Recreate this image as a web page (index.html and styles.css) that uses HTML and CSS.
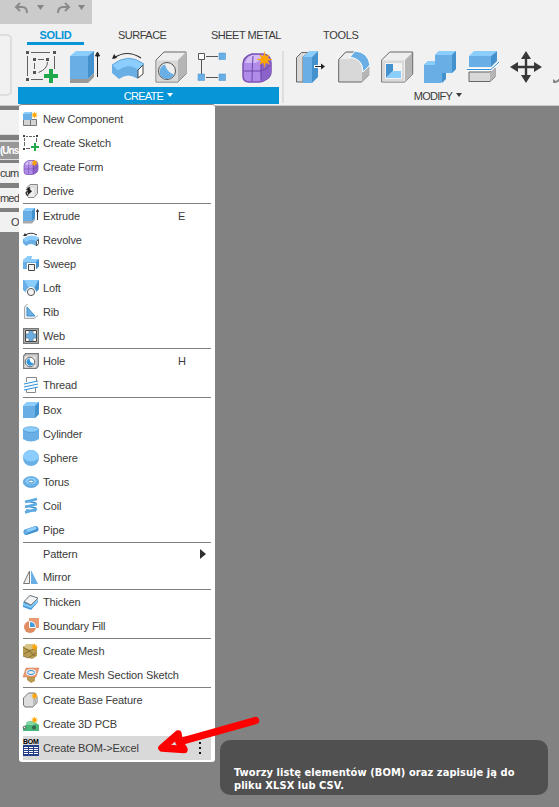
FILE: index.html
```html
<!DOCTYPE html>
<html lang="en">
<head>
<meta charset="utf-8">
<title>Create menu</title>
<link rel="stylesheet" href="styles.css">
</head>
<body>
<svg class="defs" width="0" height="0">
  <symbol id="star" viewBox="0 0 16 16"><path fill="#ffa500" d="M8 0l1.200 5L13 3l-2 3.800L16 8l-5 1.200L13 13l-3.800-2L8 16l-1.200-5L3 13l2-3.800L0 8l5-1.200L3 3l3.800 2z"/></symbol>
  <symbol id="form" viewBox="0 0 32 32"><path d="M11 3h11q8 1 8 9v9q0 4-4 7t-8 3H8q-6 0-6-6V13q0-7 9-10z" fill="#b18be8" stroke="#7952b4" stroke-width="1.500"/><path d="M11 4h9q3 1 0 4t-6 4H4q1-6 7-8z" fill="#d3bbf5"/><path d="M20 12l9-4q2 5 1 13-1 5-9 9-2-1-1-18z" fill="#8a62c8"/><path d="M12 5q-1 13-1 25M3 20h16q7-1 10-6M20 12v18" fill="none" stroke="#6c44a8"/></symbol>
</svg>
<header class="ribbon">
  <div class="history">
    <svg width="92" height="24" viewBox="0 0 92 24"><g fill="none" stroke="#8a8a8a" stroke-width="2"><path d="M20 3l-4 4 4 4M16 7h6q5 0 5 6M65 3l4 4-4 4M69 7h-6q-5 0-5 6"/></g><path d="M37 5h7l-3.500 5zM78 5h7l-3.500 5z" fill="#858585"/></svg>
  </div>
  <div class="workspace"></div>
  <nav class="tabs"><span class="tab solid">SOLID</span><span class="tab surface">SURFACE</span><span class="tab sheet">SHEET METAL</span><span class="tab tools">TOOLS</span></nav>
  <div class="groups">
    <section class="group create">
      <div class="tools-row">
        <svg viewBox="0 0 32 32"><g fill="none" stroke="#606060" stroke-width="1"><path d="M5 1.500h19M1.500 5v20M28.500 5v13M5 28.500h12M12 8.500h6M8.500 12v6M21.500 11q0 7-9 10.500"/></g><path fill="#555" d="M0 0h3v3H0zM27 0h3v3h-3zM0 27h3v3H0zM7 7h3v3H7zM20 7h3v3h-3zM7 20h3v3H7z"/><path fill="#20a84c" d="M23 18h4v5h5v4h-5v5h-4v-5h-5v-4h5z"/></svg>
        <svg viewBox="0 0 32 32"><path d="M1 28h18l6-6v4l-6 6H1z" fill="#999"/><path d="M1 5l6-5h18l-6 5z" fill="#8bcdfc"/><path d="M1 5h18v23H1z" fill="#69afe5"/><path d="M19 5l6-5v22l-6 6z" fill="#4492cd"/><path d="M28.500 26V3M26.500 5l2-4 2 4z" stroke="#222" fill="#222"/></svg>
        <svg viewBox="0 0 32 32"><path d="M2 7Q15-2 29 7" fill="none" stroke="#333" stroke-width="1.200"/><path d="M0 8l2-5 3 4z" fill="#222"/><path d="M0 14q16-13 32-1l-6 6q-10-7-20 1z" fill="#8bcdfc" stroke="#4492cd" stroke-width=".7"/><path d="M0 14l6 6q10-8 20-1v9q-10-7-19 0l-7-6z" fill="#69afe5"/><path d="M26 19l5-5v9l-5 4z" fill="#fff" stroke="#444"/></svg>
        <svg viewBox="0 0 32 32"><path d="M1 9l8-8h22v22l-8 8H1z" fill="#eee" stroke="#666"/><path d="M1.500 9.500H23v21H1.500z" fill="#d8d8d8"/><path d="M23 9l8-8v22l-8 8z" fill="#b5b5b5"/><circle cx="12" cy="20" r="8.500" fill="#eee" stroke="#555"/><path d="M10 13.500q2 8 9 10-4 6-10 4-6-3-4-9 1-4 5-5z" fill="#69afe5"/></svg>
        <svg viewBox="0 0 32 32"><path d="M8 5.500h12M3.500 9v14M8 26.500h12" stroke="#555" fill="none"/><path d="M.5 2.500h6v6h-6z" fill="#fff" stroke="#555"/><g fill="#69afe5" stroke="#4492cd" stroke-width=".5"><path d="M21 2h6.500v6.500H21zM21 23h6.500v6.500H21zM0 23h6.500v6.500H0z"/></g></svg>
        <svg viewBox="0 0 32 32"><use href="#form" width="32" height="32"/><use href="#star" x="15" y="0" width="17" height="17"/></svg>
      </div>
      <div class="caption active">CREATE<i></i></div>
    </section>
    <section class="group modify">
      <div class="tools-row">
        <svg viewBox="0 0 32 32"><path d="M1.500 6.500l5-5h7L8 6v25H1.500z" fill="#d8d8d8" stroke="#666"/><path d="M8 6l6-6h9l-6 6z" fill="#8bcdfc"/><path d="M8 6h9v26H8z" fill="#69afe5"/><path d="M17 6l6-6v26l-6 6z" fill="#4492cd"/><path d="M19 15.500h7" stroke="#fff" stroke-width="3"/><path d="M20 15.500h7" stroke="#222"/><path d="M26 12.500l4 3-4 3z" fill="#222"/></svg>
        <svg viewBox="0 0 32 32"><path d="M.7 8.500l7-7.500h10q13 1 13 15v8l-7 7H.7z" fill="#d8d8d8" stroke="#666"/><path d="M2 8l6-6h10l-6 6z" fill="#eee"/><path d="M24 22l7-7v9l-7 7z" fill="#b5b5b5"/><path d="M17 0q13 1 15 14l-7 7Q25 8 12 6z" fill="#69afe5" stroke="#fff"/></svg>
        <svg viewBox="0 0 32 32"><path d="M.7 9l8-8h23v22l-8 8h-23z" fill="#eee" stroke="#666"/><path d="M1.500 9.500H23v21H1.500z" fill="#d8d8d8"/><path d="M24 9l7-7v21l-7 8z" fill="#b5b5b5"/><path d="M4 12h17v16H4z" fill="#f3f3f3"/><path d="M5 13h7v7l-7 7z" fill="#4492cd"/><path d="M12 20h8v7H5z" fill="#8bcdfc"/></svg>
        <svg viewBox="0 0 32 32"><path d="M0 14l4-4h7V4l4-4h17v18l-4 4h-7v6l-4 4H0z" fill="#69afe5"/><path d="M0 14l4-4h7v4zM11 4l4-4h17l-4 4z" fill="#8bcdfc"/><path d="M28 4l4-4v18l-4 4zM18 22h4v6l-4 4z" fill="#4492cd"/></svg>
        <svg viewBox="0 0 32 32"><path d="M2 21h21l5-4v9l-5 4.500H2z" fill="#d8d8d8" stroke="#666"/><path d="M23 21l5-4v9l-5 4z" fill="#b5b5b5"/><path d="M2 5l5-5h23l-6 5z" fill="#8bcdfc"/><path d="M2 5h22v11H2z" fill="#69afe5"/><path d="M24 5l6-5v10l-6 6z" fill="#4492cd"/><path d="M0 18.500h24L32 11" fill="none" stroke="#fff" stroke-width="3"/><path d="M0 18.500h24L32 11" fill="none" stroke="#3190d4"/></svg>
        <svg viewBox="0 0 32 32"><path fill="#383838" d="M16 0l5 8h-3.800v6.800H24V11l8 5-8 5v-3.800h-6.800V24H21l-5 8-5-8h3.800v-6.800H8V21l-8-5 8-5v3.800h6.800V8H11z"/></svg>
        <svg viewBox="0 0 32 32"><path fill="#888" d="M0 28l3 2 4-3v3l-4 2H0z"/></svg>
      </div>
      <div class="caption">MODIFY<i></i></div>
    </section>
  </div>
</header>

<aside class="browser">
  <div class="blank"></div><div class="doc">(Uns</div><div class="entry e1">cum</div><div class="entry e2">med</div><div class="entry e3">O</div>
</aside>

<ul class="menu">
  <li><svg viewBox="0 0 16 16"><path d="M.5 8.500h7v6h-7zM7.500 8.500h6v6h-6z" fill="#d4d4d4" stroke="#777"/><path d="M0 3l2-2h7v8H0z" fill="#69afe5"/><path d="M0 3l2-2h7L7 3z" fill="#8bcdfc"/><use href="#star" x="7" y="0" width="9" height="8"/></svg>New Component</li>
  <li><svg viewBox="0 0 16 16"><path d="M3 1.500h2M6 1.500h3M10 1.500h2M1.500 3v3M1.500 7v4M13.500 3v4M3 13.500h4" stroke="#666"/><path d="M0 0h2v2H0zM13 0h2v2h-2zM0 13h2v2H0z" fill="#444"/><path d="M11 8h2v3h3v2h-3v3h-2v-3H8v-2h3z" fill="#20a84c"/></svg>Create Sketch</li>
  <li><svg viewBox="0 0 16 16"><use href="#form" width="16" height="16"/><use href="#star" x="7" y="0" width="9" height="8"/></svg>Create Form</li>
  <li><svg viewBox="0 0 16 16"><path d="M3.500 5L7 1.500h7.500v9L11 14.500H5" fill="#ddd" stroke="#888"/><path d="M5 5h6v9H5z" fill="#eee"/><path d="M7 4.500L3.500 7M5 13q-4-4 1-5" stroke="#333" stroke-width="1.700" fill="none"/><path d="M5 4.500l4 3.700L5 12z" fill="#222"/></svg>Derive</li>
  <li class="sep"></li>
  <li><svg viewBox="0 0 16 16"><path d="M0 13h9l3-3v2l-3 3.500H0z" fill="#aaa"/><path d="M0 3l3-3h9v10l-3 3H0z" fill="#69afe5"/><path d="M0 3l3-3h9L9 3z" fill="#8bcdfc"/><path d="M9 3l3-3v10l-3 3z" fill="#4492cd"/><path d="M14.500 12V2M13.500 3.500l1-2 1 2z" stroke="#333"/></svg>Extrude<kbd>E</kbd></li>
  <li><svg viewBox="0 0 16 16"><path d="M1 4q6-5 13-1" fill="none" stroke="#333"/><path d="M0 4l2-3 2 3z" fill="#333"/><path d="M0 7q8-6 16-1v6l-3 2q-5-4-10 0l-3-3z" fill="#69afe5"/><path d="M0 7q8-6 16-1l-3 3Q8 6 3 10z" fill="#8bcdfc"/><path d="M13.500 9.500l2-2v4l-2 2.500z" fill="#fff" stroke="#555"/></svg>Revolve</li>
  <li><svg viewBox="0 0 16 16"><path d="M0 4l5-4h4L8 3h8v7l-2 3H0z" fill="#69afe5"/><path d="M0 4l5-4h4L7 3h9l-3 3H0z" fill="#8bcdfc"/><path d="M13 6l3-3v7l-3 3z" fill="#4492cd"/><path d="M4 7h9v9H4z" fill="#fff"/><path d="M5.500 8.500h6v6h-6z" fill="#f4f4f4" stroke="#444"/></svg>Sweep</li>
  <li><svg viewBox="0 0 16 16"><path d="M0 0h16v9l-4 4H4L0 10z" fill="#69afe5"/><path d="M1 0h14l-4 8H6z" fill="#8bcdfc"/><path d="M16 0v9l-4 4-1-4z" fill="#4492cd"/><circle cx="8" cy="12" r="5" fill="#fff"/><circle cx="8" cy="12" r="3.600" fill="#f2f2f2" stroke="#555"/></svg>Loft</li>
  <li><svg viewBox="0 0 16 16"><path d="M2 1l2-1v10l9 4-3 1H1V5z" fill="#eee"/><path d="M4.500 0L1.500 3v11.500H11l4-3" fill="none" stroke="#aaa"/><path d="M4 3l8 9H4z" fill="#69afe5" stroke="#4492cd"/></svg>Rib</li>
  <li><svg viewBox="0 0 16 16"><path d="M.7.7h14.600v14.600H.7z" fill="#ddd" stroke="#777" stroke-width="1.400"/><path d="M2.500 2.500h11v11h-11z" fill="#f7f7f7" stroke="#444"/><path d="M6 3h4v3h3v4h-3v3H6v-3H3V6h3z" fill="#69afe5"/><path d="M6 3v3H3M10 3v3h3M3 10h3v3M13 10h-3v3" fill="none" stroke="#6f8290" stroke-width=".7"/></svg>Web</li>
  <li class="sep"></li>
  <li><svg viewBox="0 0 16 16"><path d="M.7 3l2-2.300h12.600V13l-2 2.300H.7z" fill="#ccc" stroke="#777" stroke-width="1.200"/><path d="M1.500 3.500h11v11h-11z" fill="#e5e5e5"/><circle cx="7" cy="9" r="4.800" fill="#fff" stroke="#666"/><path d="M6.500 5q0 5 4.500 5.500-3 3.500-6 1.500-4-4 1.500-7z" fill="#3295dc"/></svg>Hole<kbd>H</kbd></li>
  <li><svg viewBox="0 0 16 16"><path d="M3.500 5V.5h10V4M3.500 12v3.500h9V11" fill="none" stroke="#888"/><path d="M1 7l14-3M1 10l14-3M1 13l14-3" stroke="#3295dc" stroke-width="1.200"/></svg>Thread</li>
  <li class="sep"></li>
  <li><svg viewBox="0 0 16 16"><path d="M0 4l4-4h12v12l-4 4H0z" fill="#69afe5"/><path d="M0 4l4-4h12l-4 4z" fill="#8bcdfc"/><path d="M12 4l4-4v12l-4 4z" fill="#4492cd"/></svg>Box</li>
  <li><svg viewBox="0 0 16 16"><path d="M0 3v10q8 5 16 0V3z" fill="#69afe5"/><ellipse cx="8" cy="3.500" rx="7.700" ry="2.800" fill="#8bcdfc" stroke="#4492cd" stroke-width=".6"/></svg>Cylinder</li>
  <li><svg viewBox="0 0 16 16"><circle cx="8" cy="8" r="8" fill="#69afe5"/><path d="M0 8a8 8 0 0 1 16 0Q8 15 0 8z" fill="#8bcdfc"/></svg>Sphere</li>
  <li><svg viewBox="0 0 16 16"><ellipse cx="8" cy="8" rx="7.700" ry="5.500" fill="#69afe5" stroke="#4492cd" stroke-width=".6"/><ellipse cx="8" cy="7" rx="5.500" ry="3.500" fill="#8bcdfc"/><ellipse cx="8" cy="7.500" rx="2.700" ry="1.500" fill="#fff" stroke="#4492cd"/></svg>Torus</li>
  <li><svg viewBox="0 0 16 16"><path d="M3 3l10 2M3 8l10 2M3 12l10 1" fill="none" stroke="#4492cd" stroke-width="1.500"/><path d="M14 1L2 4M14 6L2 9M14 11L2 14.500" stroke="#5baae4" stroke-width="2.500"/></svg>Coil</li>
  <li><svg viewBox="0 0 16 16"><path d="M3.500 10l9-3" stroke="#4492cd" stroke-width="6" stroke-linecap="round"/><path d="M4 9l8-3" stroke="#8bcdfc" stroke-width="3" stroke-linecap="round"/><ellipse cx="3" cy="10" rx="1.800" ry="2" fill="#69afe5"/></svg>Pipe</li>
  <li class="sep"></li>
  <li class="short indent">Pattern<span class="submenu"></span></li>
  <li class="short"><svg viewBox="0 0 16 16"><path d="M6.500 2v12.500h-6z" fill="#eee" stroke="#777"/><path d="M8 1l7 14H8z" fill="#69afe5"/></svg>Mirror</li>
  <li class="sep"></li>
  <li><svg viewBox="0 0 16 16"><path d="M0 9l7-8 8 3v4l-7 8-8-3z" fill="#4b9cda"/><path d="M0 9l8 3 7-8v3l-7 7-8-3z" fill="#8bcdfc"/><path d="M1 7.500l6-6 8 2.500-7 7z" fill="#f3f3f3" stroke="#777"/></svg>Thicken</li>
  <li><svg viewBox="0 0 16 16"><path d="M6 0h10v10h-6V5H6z" fill="#e79b73"/><circle cx="7" cy="9" r="6" fill="#df8c62"/><path d="M6.500 3.500q6 0 6 6h-6z" fill="#3e9cdf" stroke="#fff"/></svg>Boundary Fill</li>
  <li class="sep"></li>
  <li><svg viewBox="0 0 16 16"><path d="M0 4l4-3h7l3 3v9l-5 3-9-3z" fill="#b89a50"/><path d="M0 4l4-3h7l2 4-5 2z" fill="#d7c487"/><path d="M0 4l6 4 7-3M1 11l5-3 6 5M0 13l5 2 8-5" fill="none" stroke="#7b642b" stroke-width=".8"/><use href="#star" x="7" y="0" width="9" height="8"/></svg>Create Mesh</li>
  <li><svg viewBox="0 0 16 16"><path d="M4 9h8v5l-4 2-4-3z" fill="#b89a50"/><path d="M3 1h13l-3 9H0z" fill="#e79b73" stroke="#c87a52" stroke-width=".5"/><ellipse cx="8" cy="5.500" rx="4" ry="2.300" fill="#b9dcf5" stroke="#fff" stroke-width="2"/><ellipse cx="8" cy="5.500" rx="3.700" ry="2" fill="#eee" stroke="#268bd2"/></svg>Create Mesh Section Sketch</li>
  <li class="sep"></li>
  <li><svg viewBox="0 0 16 16"><path d="M.5 6l5-5H12l2 4v6l-4 4H2L.5 13z" fill="#ddd" stroke="#777"/><path d="M10 6l4-3v8l-4 4z" fill="#bbb"/><use href="#star" x="7" y="0" width="9" height="8"/></svg>Create Base Feature</li>
  <li><svg viewBox="0 0 16 16"><path d="M0 15v-4q3 0 3-4 4-4 10 0l3 2v6z" fill="#48b879"/><path d="M3 7q4-4 10 0l-3 2H3z" fill="#85d6a7"/><circle cx="1.500" cy="11.500" r="1.300" fill="#eee" stroke="#555"/><circle cx="11" cy="11.500" r="2" fill="#386050"/><use href="#star" x="7" y="0" width="9" height="8"/></svg>Create 3D PCB</li>
  <li class="selected"><span class="bom"><b>BOM</b><svg viewBox="0 0 16 11"><path d="M0 0h16v11H0z" fill="#253f87"/><path d="M1 2.500h14M1 4.500h14M1 6.500h14M1 8.500h14" stroke="#fff" stroke-dasharray="4 1"/></svg></span>Create BOM-&gt;Excel<span class="more"><i></i><i></i><i></i></span></li>
</ul>

<div class="tooltip">Tworzy listę elementów (BOM) oraz zapisuje ją do<br>pliku XLSX lub CSV.</div>
<svg class="pointer" viewBox="0 0 110 50"><path d="M100.500 10.500L24 32l-1-8L7 38l22 1.500-5-8" fill="none" stroke="#fe0000" stroke-width="7.500" stroke-linejoin="round" stroke-linecap="round"/></svg>
</body>
</html>
```
FILE: styles.css
```css
* { box-sizing: border-box; }
body {
  margin: 0;
  width: 559px;
  height: 807px;
  overflow: hidden;
  position: relative;
  background: #828282;
  color: #3b3b3b;
  font: 11px/24px "Liberation Sans", Arial, sans-serif;
}
svg { display: block; flex: none; overflow: visible; }
.defs { position: absolute; }

.ribbon {
  height: 106px;
  position: relative;
  overflow: hidden;
  background: #f1f1f1;
  border-bottom: 1px solid #c9c9c9;
}
.history { width: 92px; height: 24px; background: #cbcbcb; }
.workspace {
  position: absolute;
  left: -8px;
  top: 34px;
  width: 20px;
  height: 62px;
  border: 2px solid #dddddd;
  border-radius: 5px;
}
.tabs { display: flex; height: 21px; padding-left: 27px; font-size: 11px; line-height: 22px; }
.tab { white-space: nowrap; letter-spacing: -.5px; }
.tab.solid { width: 57px; text-align: center; color: #0696d7; font-weight: bold; border-bottom: 3px solid #0696d7; letter-spacing: -.35px; }
.tab.surface { margin-left: 34px; width: 93px; }
.tab.sheet { width: 112px; }
.tab.tools { letter-spacing: -.3px; }

.groups { display: flex; padding: 6px 0 0 18px; }
.tools-row { display: flex; gap: 11px; height: 36px; }
.tools-row svg { width: 32px; height: 32px; }
.group { flex: none; }
.create { width: 261px; }
.create .tools-row { padding-left: 8px; }
.modify { width: 300px; margin-left: 3px; border-left: 2px solid #dedede; height: 52px; }
.modify .tools-row { padding-left: 11px; }
.caption { height: 17px; line-height: 18px; text-align: center; letter-spacing: -.75px; }
.caption i { display: inline-block; margin: 0 0 3px 4px; border: 3px solid transparent; border-top: 4px solid currentColor; border-bottom: 0; }
.caption.active { color: #fff; background: #0696d7; }
.modify .caption { width: 308px; }

.browser { width: 19px; padding-top: 4px; height: 126px; background: #808080; overflow: hidden; }
.blank { height: 25px; background: #f1f1f1; border-bottom: 1px solid #ddd; }
.doc { height: 20px; margin-top: 5px; line-height: 17px; background: #989898; color: #fff; font-size: 10px; font-weight: bold; letter-spacing: -1px; border: solid #ddd; border-width: 2px 0 1px; }
.entry { height: 20px; line-height: 21px; background: #f1f1f1; overflow: hidden; letter-spacing: -.8px; }
.e1 { margin-top: 3px; }
.e2 { margin-top: 5px; }
.e3 { margin-top: 4px; padding-left: 11px; }

.menu {
  position: absolute;
  left: 19px;
  top: 104px;
  width: 196px;
  height: 658px;
  margin: 0;
  padding: 2px 4px 2px;
  list-style: none;
  background: #fff;
  border-top: 1px solid #858585;
  border-radius: 3px;
}
.menu li { display: flex; align-items: center; height: 24px; gap: 4px; white-space: nowrap; letter-spacing: -.14px; }
.menu li > svg { width: 16px; height: 16px; }
.menu li.sep { height: 1px; background: #808080; }
.menu li.short { height: 23px; padding-bottom: 1px; }
.menu li.indent { padding-left: 20px; }
.menu li.selected { background: #d9d9d9; }
kbd { font: inherit; margin-left: auto; width: 33px; }
.submenu { margin: 0 5px 0 auto; border: 5px solid transparent; border-left: 6px solid #303030; border-right: 0; }
.more { display: flex; flex-direction: column; gap: 3px; margin: 0 10px 0 auto; }
.more i { width: 2px; height: 2px; background: #111; }
.bom { width: 16px; height: 16px; flex: none; }
.bom b { display: block; height: 5px; font: bold 7px/4px "Liberation Sans", sans-serif; color: #000; letter-spacing: -.2px; }
.bom svg { width: 16px; height: 11px; }

.tooltip {
  position: absolute;
  left: 220px;
  top: 740px;
  width: 328px;
  height: 55px;
  padding: 26px 14px 0;
  border-radius: 10px;
  background: #505050;
  color: #fff;
  font: bold 11px/13px "DejaVu Sans Condensed", "DejaVu Sans", sans-serif;
  font-stretch: condensed;
  letter-spacing: .07px;
  white-space: nowrap;
}
.pointer { position: absolute; left: 155px; top: 710px; width: 110px; height: 50px; }
```
